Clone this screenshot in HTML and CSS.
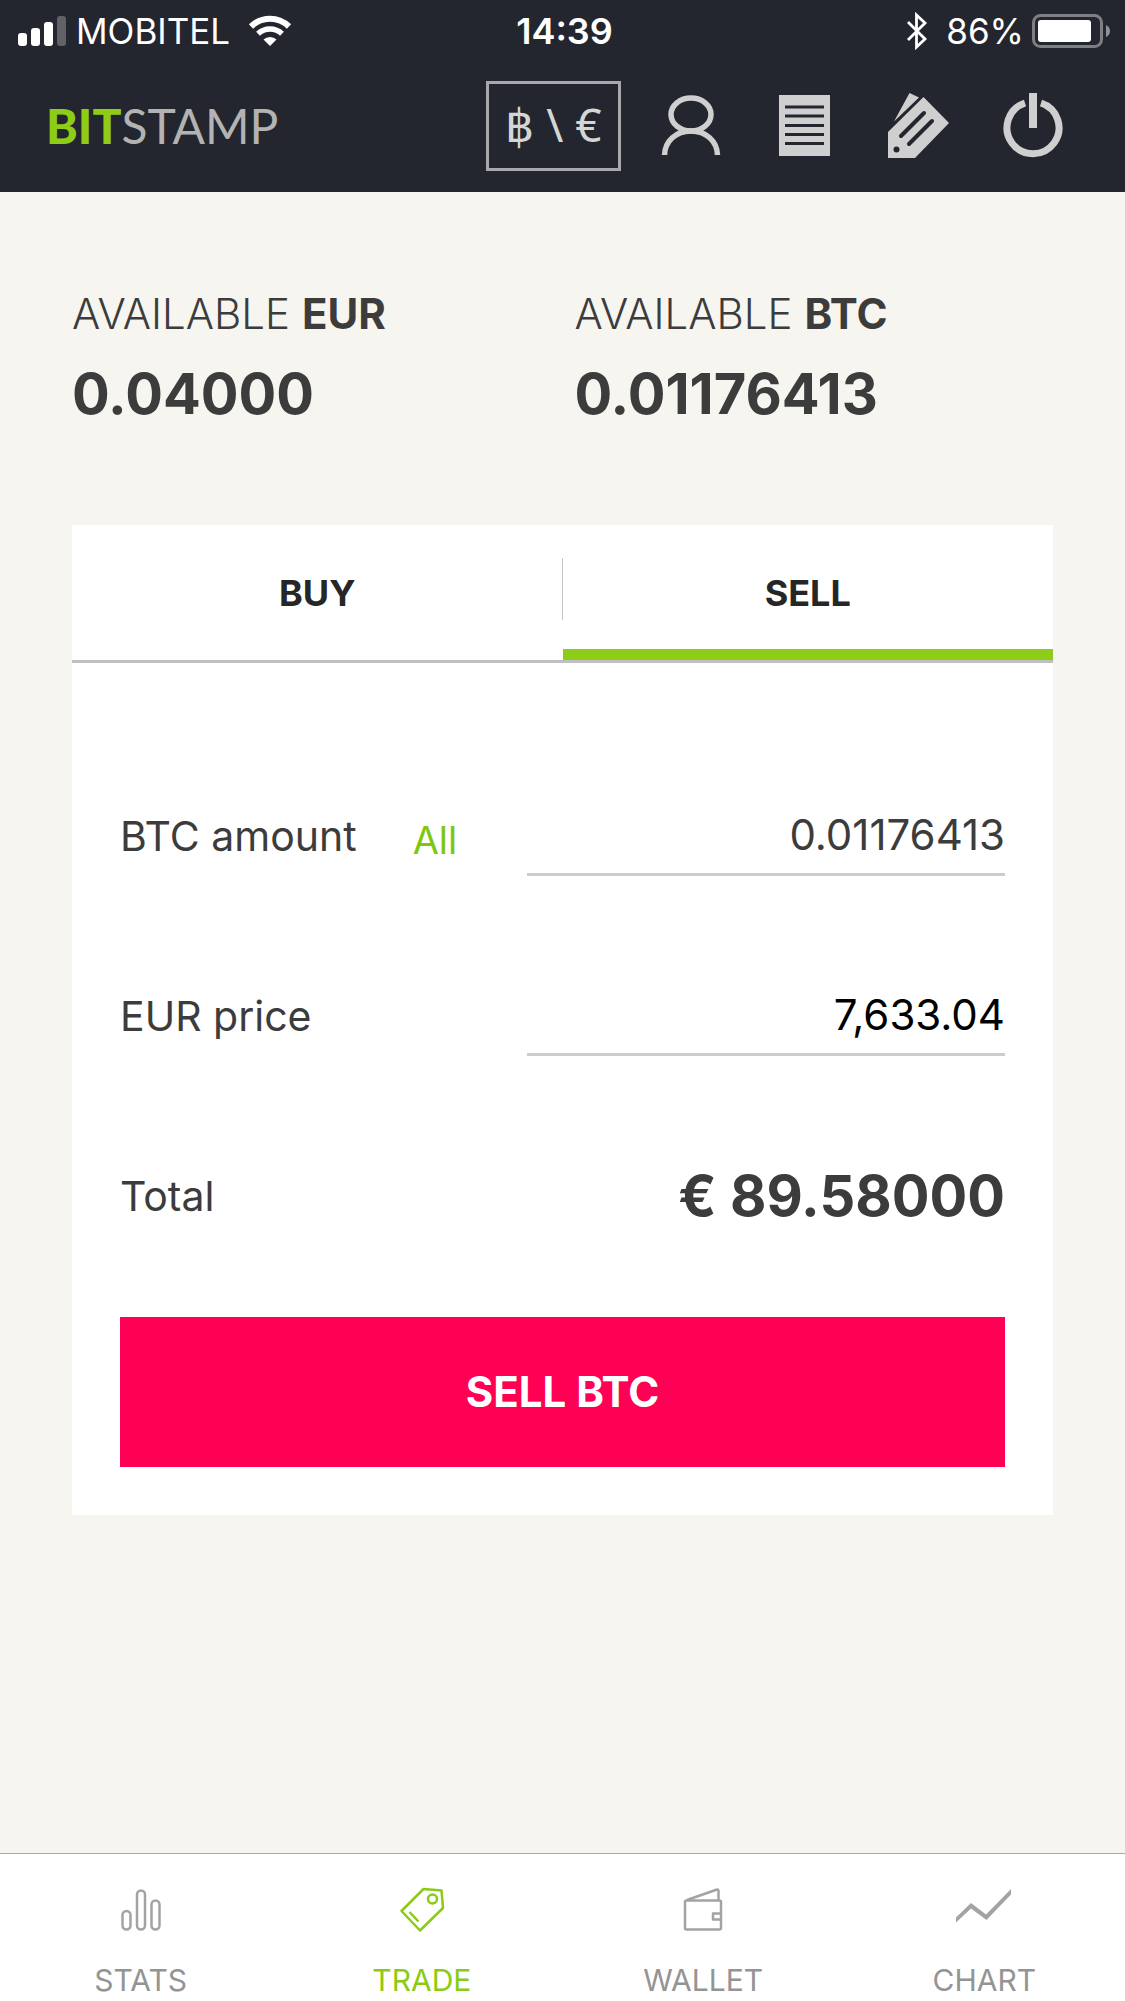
FILE: index.html
```html
<!DOCTYPE html>
<html lang="en">
<head>
<meta charset="utf-8">
<meta name="viewport" content="width=device-width, initial-scale=1">
<title>Bitstamp – Trade</title>
<link rel="stylesheet" href="styles.css">
</head>
<body>
<div class="app">
  <header class="header">
    <div class="status">
      <div class="status-side">
        <svg class="signal" width="48" height="32" viewBox="0 0 48 32" aria-hidden="true">
          <rect x="0" y="18" width="9" height="13" rx="3"/>
          <rect x="13" y="13" width="9" height="18" rx="3"/>
          <rect x="26" y="7" width="9" height="24" rx="3"/>
          <rect x="39" y="1" width="9" height="30" rx="3" opacity=".28"/>
        </svg>
        <span class="carrier">MOBITEL</span>
        <svg class="wifi" width="44" height="32" viewBox="0 0 44 32" aria-hidden="true">
          <path d="M3 11.5a27 27 0 0 1 38 0" fill="none" stroke="#fff" stroke-width="6"/>
          <path d="M10 18.700a17.500 17.500 0 0 1 24 0" fill="none" stroke="#fff" stroke-width="5.500"/>
          <path d="M22 31l-6.500-6.500a9.500 9.500 0 0 1 13 0z" fill="#fff"/>
        </svg>
      </div>
      <time class="clock">14:39</time>
      <div class="status-side status-right">
        <svg class="bluetooth" width="22" height="38" viewBox="0 0 22 38" aria-hidden="true">
          <path d="M2 10l17 17-8.500 8V3l8.500 8L2 28" fill="none" stroke="#fff" stroke-width="2.800"/>
        </svg>
        <span>86%</span>
        <svg class="battery" width="79" height="34" viewBox="0 0 79 34" aria-hidden="true">
          <rect x="1.500" y="1.500" width="68" height="31" rx="7" fill="none" stroke="#7d7f83" stroke-width="3"/>
          <rect x="6" y="6" width="53" height="22" rx="3" fill="#fff"/>
          <path d="M74 11q4 2 4 6t-4 6z" fill="#909296"/>
        </svg>
      </div>
    </div>
    <div class="toolbar">
      <a class="logo" href="#"><b>BIT</b>STAMP</a>
      <nav class="tools" aria-label="Account">
        <button class="pair" type="button">฿ \ €</button>
        <a class="tool" href="#" aria-label="Profile">
          <svg width="64" height="68" viewBox="0 0 64 68" fill="none" stroke="#cfcfd0" stroke-width="5.500">
            <ellipse cx="32" cy="22.500" rx="20" ry="16.500"/>
            <path d="M5.500 63C6 49 17 39 32 39s26 10 26.500 24"/>
          </svg>
        </a>
        <a class="tool" href="#" aria-label="Orders">
          <svg width="64" height="68" viewBox="0 0 64 68">
            <path d="M6 3h51v61H6z" fill="#cfcfd0"/>
            <path d="M12 15h39M12 24h39M12 33.500h39M12 42.500h39M12 51.500h39" stroke="#23262e" stroke-width="3.200"/>
          </svg>
        </a>
        <a class="tool" href="#" aria-label="Coupons">
          <svg width="64" height="68" viewBox="0 0 64 68">
            <path d="M22.500 1L32 5.500 7 29.500z" fill="#cfcfd0"/>
            <path d="M36.500 5L62 31 28 66H1V40z" fill="#cfcfd0"/>
            <path d="M14 44l23-23M22 52l23-23" stroke="#23262e" stroke-width="4" stroke-linecap="round"/>
            <circle cx="9.500" cy="57.500" r="3" fill="#23262e"/>
          </svg>
        </a>
        <a class="tool" href="#" aria-label="Log out">
          <svg width="64" height="68" viewBox="0 0 64 68" fill="none" stroke="#cfcfd0">
            <path d="M24 11A26 26 0 1 0 40 11" stroke-width="7"/>
            <path d="M32 1v35" stroke-width="8"/>
          </svg>
        </a>
      </nav>
    </div>
  </header>

  <main class="main">
    <section class="balances">
      <div>
        <h2 class="balance-name">AVAILABLE <b>EUR</b></h2>
        <p class="balance-value">0.04000</p>
      </div>
      <div>
        <h2 class="balance-name">AVAILABLE <b>BTC</b></h2>
        <p class="balance-value">0.01176413</p>
      </div>
    </section>

    <section class="card">
      <div class="tabs" role="tablist">
        <button class="tab" type="button" role="tab" aria-selected="false">BUY</button>
        <button class="tab tab-active" type="button" role="tab" aria-selected="true">SELL</button>
      </div>
      <form class="form">
        <div class="row">
          <div class="row-label">
            <label for="amount">BTC amount</label>
            <button class="all" type="button">All</button>
          </div>
          <input class="field field-filled" id="amount" type="text" inputmode="decimal" value="0.01176413">
        </div>
        <div class="row">
          <div class="row-label"><label for="price">EUR price</label></div>
          <input class="field" id="price" type="text" inputmode="decimal" value="7,633.04">
        </div>
        <div class="row">
          <label for="total">Total</label>
          <output class="total" id="total">€ 89.58000</output>
        </div>
        <button class="submit" type="button">SELL BTC</button>
      </form>
    </section>
  </main>

  <nav class="bottom" aria-label="Main">
    <a class="item" href="#">
      <svg width="60" height="48" viewBox="0 0 60 48" fill="none" stroke="#a3a3a3" stroke-width="2.500">
        <rect x="11.500" y="25" width="8" height="18.500" rx="4"/>
        <rect x="26" y="4.500" width="8" height="39" rx="4"/>
        <rect x="40.500" y="14.500" width="8" height="29" rx="4"/>
      </svg>
      STATS
    </a>
    <a class="item item-active" href="#" aria-current="page">
      <svg width="60" height="48" viewBox="0 0 60 48" fill="none" stroke="#8acb15" stroke-width="2.500" stroke-linejoin="round">
        <path d="M31.500 3L49.500 4.500 51 22 28 44.500 9.500 25z"/>
        <circle cx="40.500" cy="13" r="4.500"/>
        <path d="M17.500 26l9 9.500"/>
      </svg>
      TRADE
    </a>
    <a class="item" href="#">
      <svg width="60" height="48" viewBox="0 0 60 48" fill="none" stroke="#a3a3a3" stroke-width="2.500" stroke-linejoin="round">
        <rect x="12" y="14.500" width="36" height="29" rx="1.500"/>
        <path d="M14 14L44 3.500q1.500 0 1.500 1.500V14M48 27.500h-8v6h8"/>
      </svg>
      WALLET
    </a>
    <a class="item" href="#">
      <svg width="60" height="48" viewBox="0 0 60 48">
        <path d="M2 36.500V31.500L17 17 32 28.500 57 3v5.500L32.500 34 17 22.500z" fill="#a3a3a3"/>
      </svg>
      CHART
    </a>
  </nav>
</div>
</body>
</html>
```

FILE: styles.css
```css
* {
  box-sizing: border-box;
}

body {
  margin: 0;
  background: #f6f5f0;
  color: #3c3c3c;
  font-family: Inter, "Liberation Sans", sans-serif;
  font-size: 41px;
  line-height: 48px;
}

button,
input {
  margin: 0;
  padding: 0;
  border: 0;
  background: none;
  color: inherit;
  font: inherit;
}

svg {
  display: block;
  flex: none;
}

a {
  color: inherit;
  text-decoration: none;
}

.app {
  display: flex;
  flex-direction: column;
  min-height: 100vh;
}

/* Header */

.header {
  background: #23262e;
}

.status {
  display: grid;
  grid-template-columns: 1fr auto 1fr;
  align-items: center;
  height: 62px;
  padding: 0 14px 0 18px;
  color: #fff;
  font-size: 35px;
}

.status-side {
  display: flex;
  align-items: center;
  gap: 10px;
}

.status-right {
  gap: 8px;
  justify-content: flex-end;
}

.signal {
  fill: #fff;
}

.wifi {
  margin-left: 8px;
}

.bluetooth {
  margin-right: 10px;
}

.clock {
  font-size: 36px;
  font-weight: 600;
}

.toolbar {
  display: flex;
  align-items: center;
  justify-content: space-between;
  height: 130px;
  padding: 0 60px 2px 46px;
}

.logo {
  color: #b3b3b3;
  font-family: Lato, sans-serif;
  font-size: 48px;
}

.logo b {
  color: #8dcc17;
  font-weight: 900;
}

.tools {
  display: flex;
  align-items: center;
  gap: 50px;
}

.pair {
  width: 135px;
  height: 90px;
  margin-right: -12px;
  padding-bottom: 4px;
  border: 3px solid #a9a9ad;
  color: #d4d6d6;
  font-family: "Noto Sans", sans-serif;
  font-size: 46px;
}

/* Balances */

.main {
  flex: 1;
  padding: 98px 72px;
}

.balances {
  display: grid;
  grid-template-columns: 1fr 1fr;
  gap: 24px;
}

.balance-name,
.balance-value {
  margin: 0;
}

.balance-name {
  font-size: 42px;
  font-weight: 300;
}

.balance-name b {
  font-weight: 700;
}

.balance-value {
  margin-top: 24px;
  font-size: 56px;
  font-weight: 700;
  line-height: 64px;
}

/* Order card */

.card {
  margin-top: 99px;
  background: #fff;
}

.tabs {
  display: grid;
  grid-template-columns: 1fr 1fr;
  height: 138px;
  border-bottom: 3px solid #bfbfbf;
  background: linear-gradient(#c4c4c4, #c4c4c4) 50% 33px / 1px 62px no-repeat;
}

.tab {
  border-top: 11px solid transparent;
  border-bottom: 11px solid transparent;
  color: #262626;
  font-size: 36px;
  font-weight: 700;
}

.tab-active {
  border-bottom-color: #8dcc17;
}

.form {
  display: flex;
  flex-direction: column;
  padding: 123px 48px 48px;
}

.row {
  display: flex;
  align-items: center;
  justify-content: space-between;
  height: 90px;
  margin-bottom: 90px;
  padding-top: 10px;
}

.row:last-of-type {
  margin-bottom: 81px;
}

.row-label {
  display: flex;
  align-items: flex-end;
  gap: 56px;
}

.all {
  color: #7ec70c;
  font-size: 38px;
  line-height: 40px;
}

.field {
  width: 54%;
  height: 80px;
  border-bottom: 3px solid #ccc;
  color: #000;
  font-size: 42px;
  text-align: right;
}

.field-filled {
  color: #3c3c3c;
}

.total {
  font-size: 56px;
  font-weight: 700;
}

.submit {
  height: 150px;
  background: #f05;
  color: #fff;
  font-size: 42px;
  font-weight: 700;
}

/* Bottom navigation */

.bottom {
  display: grid;
  grid-template-columns: repeat(4, 1fr);
  height: 148px;
  border-top: 1px solid #a8a8a8;
  background: #fff;
}

.item {
  display: flex;
  flex-direction: column;
  align-items: center;
  gap: 26px;
  padding-top: 32px;
  color: #949494;
  font-size: 30px;
  line-height: 40px;
}

.item-active {
  color: #8acb15;
}
```
